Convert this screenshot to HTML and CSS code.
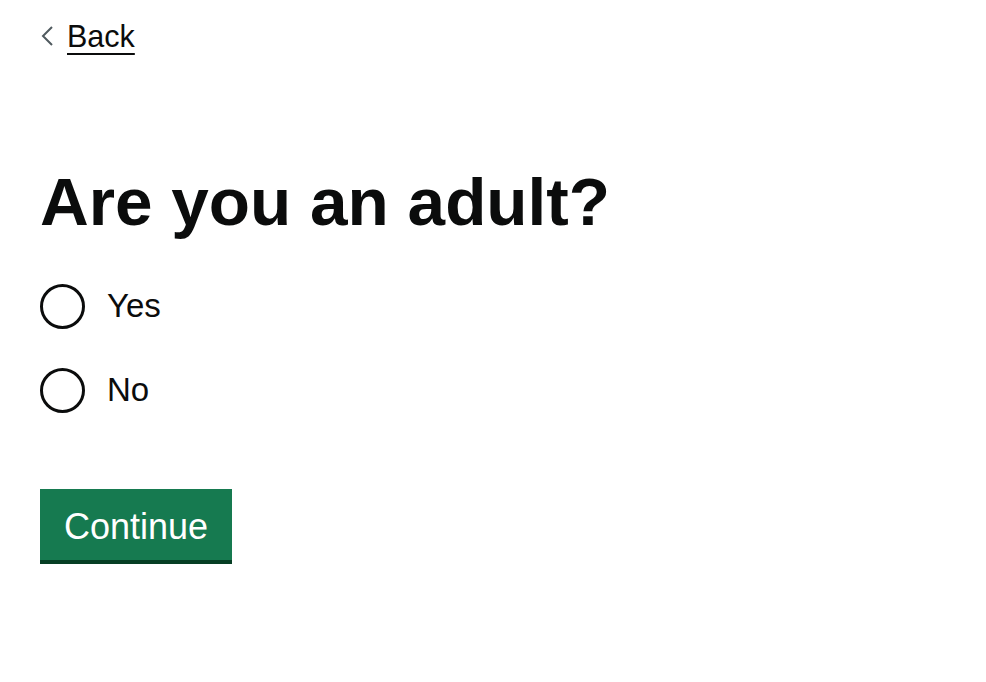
FILE: index.html
```html
<!DOCTYPE html>
<html lang="en">
<head>
<meta charset="utf-8">
<title>Are you an adult?</title>
<link rel="stylesheet" href="styles.css">
</head>
<body>
<div class="page">
  <a class="back-link" href="#">
    <svg class="back-chevron" width="12" height="20" viewBox="0 0 12 20" aria-hidden="true">
      <path d="M11 1 L2 10 L11 19" fill="none" stroke="#505a5f" stroke-width="2"/>
    </svg>
    <span class="back-text">Back</span>
  </a>
  <main class="main">
    <form class="form">
      <fieldset class="fieldset">
        <legend class="legend"><h1 class="heading">Are you an adult?</h1></legend>
        <div class="radios">
          <label class="radio">
            <input class="radio-input" type="radio" name="adult" value="yes">
            <span class="radio-circle"></span>
            <span class="radio-label">Yes</span>
          </label>
          <label class="radio">
            <input class="radio-input" type="radio" name="adult" value="no">
            <span class="radio-circle"></span>
            <span class="radio-label">No</span>
          </label>
        </div>
      </fieldset>
      <button class="button" type="button">Continue</button>
    </form>
  </main>
</div>
</body>
</html>
```
FILE: styles.css
```css
html, body {
  margin: 0;
  padding: 0;
  background: #ffffff;
}
body {
  font-family: "Liberation Sans", Arial, Helvetica, sans-serif;
  color: #0b0c0c;
}
.page {
  padding: 18px 40px 0 40px;
}
.back-link {
  display: inline-flex;
  align-items: center;
  gap: 14px;
  color: #0b0c0c;
  text-decoration: none;
  font-size: 30.5px;
  line-height: 36px;
}
.back-chevron {
  display: block;
  margin-left: 1px;
  margin-top: -1px;
}
.back-text {
  text-decoration: underline;
  text-decoration-thickness: 2px;
  text-underline-offset: 6px;
}
.main {
  padding-top: 111px;
}
.form {
  margin: 0;
}
.fieldset {
  margin: 0;
  padding: 0;
  border: 0;
  min-width: 0;
}
.legend {
  padding: 0;
  margin: 0;
}
.heading {
  margin: 0;
  font-size: 67.5px;
  line-height: 74px;
  font-weight: 700;
  color: #0b0c0c;
}
.radios {
  display: flex;
  flex-direction: column;
  gap: 39px;
  margin-top: 45px;
}
.radio {
  display: flex;
  align-items: flex-start;
  gap: 22px;
  cursor: pointer;
}
.radio-input {
  position: absolute;
  opacity: 0;
  width: 0;
  height: 0;
  margin: 0;
}
.radio-circle {
  width: 45px;
  height: 45px;
  box-sizing: border-box;
  border: 3px solid #0b0c0c;
  border-radius: 50%;
  flex: none;
}
.radio-label {
  font-size: 33px;
  line-height: 36px;
  padding-top: 4px;
}
.button {
  display: inline-block;
  box-sizing: content-box;
  margin-top: 76px;
  padding: 5px 24px 0 24px;
  height: 66px;
  line-height: 66px;
  font-family: "Liberation Sans", Arial, Helvetica, sans-serif;
  font-size: 36px;
  color: #ffffff;
  background: #167a50;
  border: 0;
  border-bottom: 4px solid #063e24;
  border-radius: 0;
  cursor: pointer;
}
```
